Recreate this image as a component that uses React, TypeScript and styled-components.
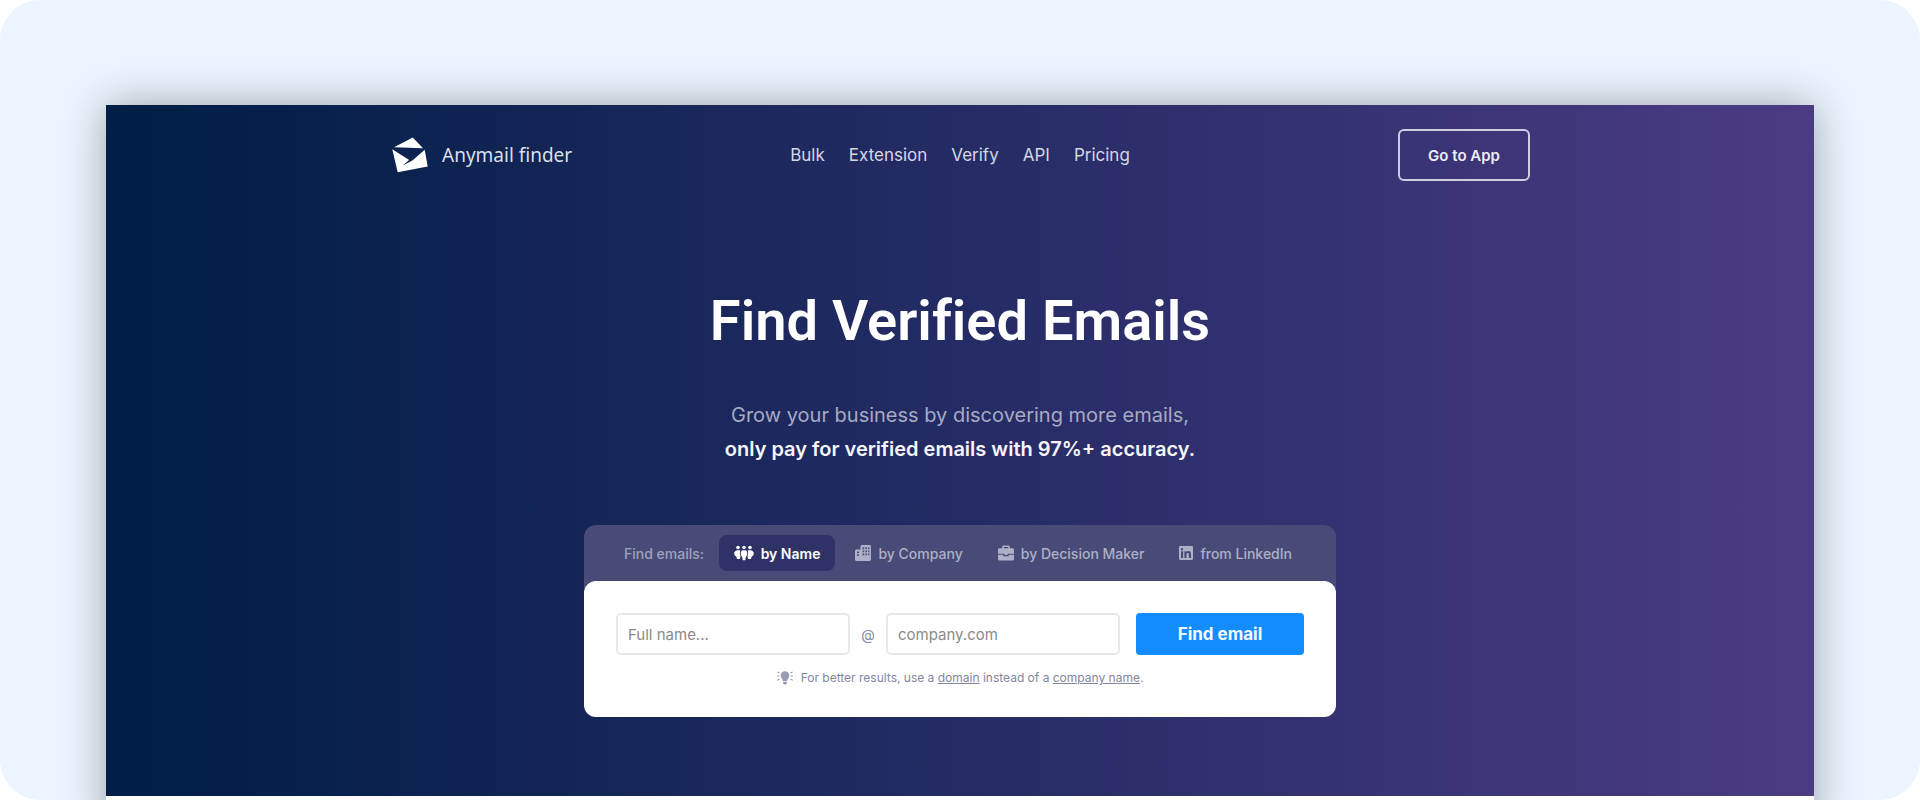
import React, { useState } from "react";
import styled, { createGlobalStyle } from "styled-components";

const GlobalStyle = createGlobalStyle`
  * { box-sizing: border-box; }
  body {
    margin: 0;
    background: #ffffff;
    font-family: Inter, "Liberation Sans", sans-serif;
  }
  button, input { font-family: inherit; }
`;

const Stage = styled.div`
  display: flex;
  height: 100vh;
  padding: 105px 106px 0;
  border-radius: 40px;
  background: #ecf5ff;
  overflow: hidden;
`;

const Window = styled.div`
  flex: 1;
  align-self: flex-start;
  padding-bottom: 40px;
  background: #ffffff;
  box-shadow: 0 0 40px rgba(0, 0, 0, 0.34);
`;

const Hero = styled.div`
  display: flex;
  flex-direction: column;
  align-items: center;
  padding: 24px 24px 79px;
  background: linear-gradient(90deg, #001e46 2%, #262c66 52%, #4a3b83 99%);
`;

const Header = styled.header`
  display: grid;
  grid-template-columns: 1fr auto 1fr;
  align-items: center;
  width: 100%;
  max-width: 1140px;
`;

const Brand = styled.a`
  display: flex;
  align-items: center;
  gap: 14px;
  padding-left: 2px;
  color: #dcdfe9;
  font-family: "Noto Sans", "Open Sans", sans-serif;
  font-size: 19px;
  line-height: 24px;
  text-decoration: none;
`;

const Nav = styled.nav`
  display: flex;
  gap: 24px;
`;

const NavLink = styled.a`
  color: #d5d7e4;
  font-size: 17px;
  line-height: 24px;
  text-decoration: none;
`;

const AppButton = styled.button`
  justify-self: end;
  width: 132px;
  height: 52px;
  padding: 0;
  border: 2px solid #cfcde2;
  border-radius: 6px;
  background: transparent;
  color: #eeedf5;
  font-size: 15px;
  font-weight: 600;
`;

const Title = styled.h1`
  margin: 104px 0 0;
  color: #ffffff;
  font-family: Roboto, Inter, sans-serif;
  font-size: 56px;
  font-weight: 600;
  font-variant-ligatures: none;
  line-height: 72px;
  text-align: center;
`;

const Lead = styled.p`
  margin: 41px 0 0;
  color: #a7aac3;
  font-size: 20px;
  line-height: 34px;
  text-align: center;

  strong {
    display: block;
    color: #f6f6fa;
    font-weight: 600;
  }
`;

const Panel = styled.section`
  width: 100%;
  max-width: 752px;
  margin-top: 59px;
  border-radius: 12px;
  background: #484b77;
`;

const Tabs = styled.div`
  display: flex;
  align-items: center;
  gap: 5px;
  height: 56px;
  padding: 0 29px 0 40px;
`;

const TabsLabel = styled.span`
  margin-right: auto;
  color: #9fa2bb;
  font-size: 14px;
  font-weight: 500;
`;

const Tab = styled.button<{ $active?: boolean }>`
  display: flex;
  align-items: center;
  gap: 7px;
  height: 36px;
  padding: 0 15px;
  border: 0;
  border-radius: 8px;
  background: ${(p) => (p.$active ? "#2f3267" : "transparent")};
  color: ${(p) => (p.$active ? "#ffffff" : "#adb0c6")};
  font-size: 14px;
  font-weight: ${(p) => (p.$active ? 600 : 500)};
  white-space: nowrap;
`;

const Card = styled.div`
  padding: 32px 32px 29px;
  border-radius: 12px;
  background: #ffffff;
`;

const Form = styled.form`
  display: flex;
  align-items: center;
`;

const Field = styled.input`
  flex: 1;
  min-width: 0;
  height: 42px;
  padding: 0 10px;
  border: 2px solid #e8e8eb;
  border-radius: 5px;
  background: #ffffff;
  color: #333333;
  font-size: 15px;

  &::placeholder {
    color: #8a8a8a;
    opacity: 1;
  }
`;

const At = styled.span`
  width: 36px;
  color: #8289a5;
  font-size: 14px;
  text-align: center;
`;

const Submit = styled.button`
  width: 168px;
  height: 42px;
  margin-left: 16px;
  padding: 0;
  border: 0;
  border-radius: 4px;
  background: #128cff;
  color: #f4faff;
  font-size: 17px;
  font-weight: 700;
`;

const Hint = styled.p`
  display: flex;
  align-items: center;
  justify-content: center;
  gap: 8px;
  margin: 13px 0 0;
  color: #80869f;
  font-size: 12px;
  line-height: 20px;

  a { color: inherit; }
`;

const LogoMark = () => (
  <svg width="36" height="36" viewBox="0 0 36 36" aria-hidden="true">
    <path d="M2 10.2 20.8.5 31 11.2Z" fill="#fff" />
    <path d="M.3 12.3 17.2 23.1 10.5 28.7 20.7 23.3 32.7 12.7 35.7 29.5 5.7 35.2Z" fill="#fff" />
  </svg>
);

const PeopleIcon = () => (
  <svg width="20" height="16" viewBox="0 0 20 16" fill="currentColor" aria-hidden="true">
    <circle cx="4" cy="2.500" r="1.800" />
    <circle cx="10" cy="2.500" r="1.800" />
    <circle cx="16" cy="2.500" r="1.800" />
    <path d="M3.6 5.2h2.200c.5 0 .7.3.5.8-.7 1.600-.7 3.800.3 5.300L5.900 14H3.100l-.8-2.600C.9 10.800.2 9.800.2 8.400c0-1.900 1.400-3.200 3.400-3.200Z" />
    <path d="M16.400 5.200h-2.200c-.5 0-.7.3-.5.8.7 1.600.7 3.800-.3 5.300l.7 2.700h2.800l.8-2.600c1.400-.6 2.100-1.600 2.100-3 0-1.900-1.400-3.200-3.400-3.200Z" />
    <path d="M8.900 5.200h2.200c1.300 0 2.200 1.500 2.200 3.300 0 1.500-.6 2.700-1.500 3.300l-.5 3.400H8.700l-.5-3.400c-.9-.6-1.500-1.800-1.500-3.300 0-1.800.9-3.300 2.200-3.300Z" />
  </svg>
);

const CompanyIcon = () => (
  <svg width="16" height="16" viewBox="0 0 16 16" aria-hidden="true">
    <path fill="currentColor" fillRule="evenodd" d="M7 0h7.500C15.300 0 16 .7 16 1.500v13c0 .8-.7 1.500-1.500 1.500h-13C.7 16 0 15.300 0 14.500v-8C0 5.200.7 4.500 1.500 4.500h4V1.500C5.500.7 6.200 0 7 0ZM2 6.500V8h2V6.500H2Zm0 2.700v1.500h2V9.200H2Zm5.500-7v2h1.700v-2H7.500Zm2.900 0v2h1.500v-2h-1.500Zm2.700 0v2h1.300v-2h-1.300ZM7.500 5.400v1.800h1.700V5.400H7.500Zm2.900 0v1.800h1.500V5.400h-1.500Zm2.700 0v1.800h1.300V5.400h-1.300ZM7.500 8.400v1.900h1.700V8.400H7.500Zm2.900 0v1.900h1.500V8.400h-1.500Zm2.700 0v1.900h1.300V8.400h-1.300Z" />
  </svg>
);

const BriefcaseIcon = () => (
  <svg width="16" height="16" viewBox="0 0 16 16" aria-hidden="true">
    <path fill="currentColor" fillRule="evenodd" d="M5.700.5h4.600c1 0 1.500.7 1.500 1.500v1.200h2.700c.9 0 1.500.6 1.500 1.500v4H0v-4c0-.9.600-1.500 1.500-1.500h2.700V2c0-.8.5-1.500 1.500-1.500Zm.1 1.600v1.100h4.400V2.100H5.800Z" />
    <path fill="currentColor" d="M0 9.700h5.200v.6c0 .6.400 1 1 1h3.600c.6 0 1-.4 1-1v-.6H16V14c0 .9-.6 1.500-1.500 1.500h-13C.6 15.500 0 14.900 0 14Z" />
    <path fill="currentColor" d="M6.400 8h3.200v2H6.400z" />
  </svg>
);

const LinkedInIcon = () => (
  <svg width="14" height="14" viewBox="0 0 14 14" aria-hidden="true">
    <path fill="currentColor" fillRule="evenodd" d="M1.200 0h11.600C13.500 0 14 .5 14 1.200v11.600c0 .7-.5 1.200-1.200 1.200H1.200C.5 14 0 13.500 0 12.800V1.200C0 .5.5 0 1.200 0ZM2 5.300v6.600h2.100V5.300H2ZM3 2a1.200 1.200 0 1 0 0 2.400A1.200 1.200 0 0 0 3 2Zm2.400 3.300v6.600h2.100V8.500c0-.9.300-1.600 1.200-1.600s1.100.7 1.100 1.600v3.400H12V8.200c0-2-.8-3.100-2.500-3.100-1 0-1.700.5-2 1.100v-.9H5.400Z" />
  </svg>
);

const BulbIcon = () => (
  <svg width="16" height="14" viewBox="0 0 16 14" aria-hidden="true">
    <path fill="#979cb3" d="M8 .3c2.500 0 4.300 1.800 4.300 4.200 0 2.200-1.800 3-2.200 5.500H5.900C5.500 7.500 3.700 6.700 3.700 4.500 3.700 2.100 5.500.3 8 .3ZM6.100 10.700h3.800v1.200L9.100 13.500H6.900l-.8-1.600Z" />
    <path stroke="#979cb3" strokeWidth="1.200" strokeLinecap="round" d="M.8 1.200 2 1.800M.5 5h1.500M.8 9 2 8.300M15.200 1.200 14 1.800M15.500 5H14M15.200 9 14 8.300" />
  </svg>
);

const navItems = ["Bulk", "Extension", "Verify", "API", "Pricing"];

const tabs = [
  { label: "by Name", Icon: PeopleIcon },
  { label: "by Company", Icon: CompanyIcon },
  { label: "by Decision Maker", Icon: BriefcaseIcon },
  { label: "from LinkedIn", Icon: LinkedInIcon },
];

export default function App() {
  const [active, setActive] = useState("by Name");

  return (
    <>
      <GlobalStyle />
      <Stage>
        <Window>
          <Hero>
            <Header>
              <Brand href="#home">
                <LogoMark />
                Anymail finder
              </Brand>
              <Nav>
                {navItems.map((item) => (
                  <NavLink key={item} href={`#${item.toLowerCase()}`}>{item}</NavLink>
                ))}
              </Nav>
              <AppButton type="button">Go to App</AppButton>
            </Header>

            <Title>Find Verified Emails</Title>
            <Lead>
              Grow your business by discovering more emails,
              <strong>only pay for verified emails with 97%+ accuracy.</strong>
            </Lead>

            <Panel>
              <Tabs>
                <TabsLabel>Find emails:</TabsLabel>
                {tabs.map(({ label, Icon }) => (
                  <Tab
                    key={label}
                    type="button"
                    $active={active === label}
                    aria-pressed={active === label}
                    onClick={() => setActive(label)}
                  >
                    <Icon />
                    {label}
                  </Tab>
                ))}
              </Tabs>
              <Card>
                <Form onSubmit={(e) => e.preventDefault()}>
                  <Field type="text" aria-label="Full name" placeholder="Full name..." />
                  <At>@</At>
                  <Field type="text" aria-label="Company domain" placeholder="company.com" />
                  <Submit type="submit">Find email</Submit>
                </Form>
                <Hint>
                  <BulbIcon />
                  <span>
                    For better results, use a <a href="#domain">domain</a> instead of a{" "}
                    <a href="#company-name">company name</a>.
                  </span>
                </Hint>
              </Card>
            </Panel>
          </Hero>
        </Window>
      </Stage>
    </>
  );
}
